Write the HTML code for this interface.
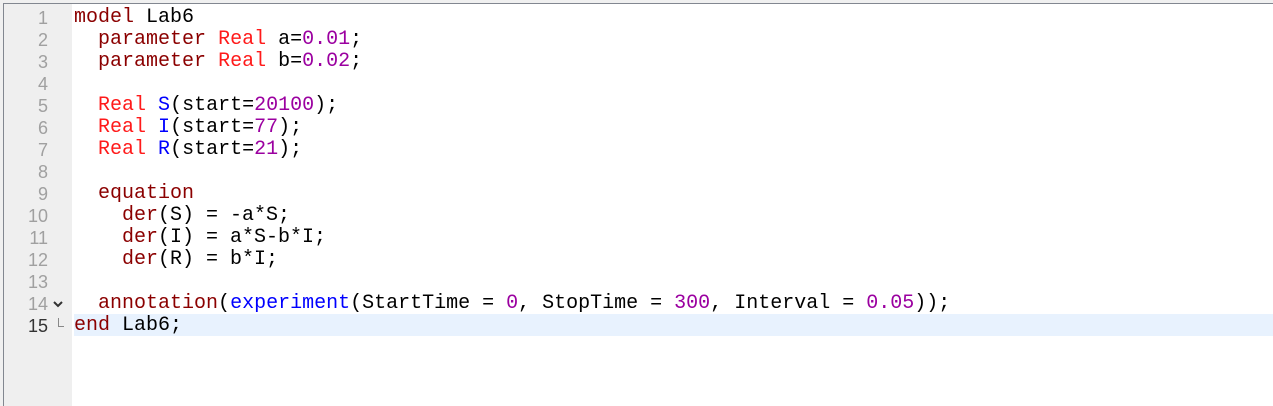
<!DOCTYPE html>
<html><head><style>
html,body{margin:0;padding:0;width:1273px;height:406px;overflow:hidden;background:#f0f0f0;}
#ed{position:absolute;left:3px;top:3px;right:0;bottom:0;border-left:1px solid #828790;border-top:1px solid #828790;background:#fff;}
#gut{position:absolute;left:0;top:0;width:68px;bottom:0;background:#efefef;}
.l{position:absolute;left:0;right:0;height:22px;font:20px/22px "Liberation Mono",monospace;white-space:pre;margin-top:1px;}
.n{position:absolute;left:0;width:44px;text-align:right;color:#a0a0a0;font-family:"Liberation Sans",sans-serif;font-size:18px;}
.c{position:absolute;left:70px;}
.k{color:#8b0000}.t{color:#ff1a1a}.v{color:#0000ff}.m{color:#9b00a0}
.cur{background:#e8f2fe;left:70px;margin-top:0;}
</style></head><body>
<div id="ed"><div id="gut"></div>
<div class="l" style="top:2px"><span class="n">1</span><span class="c"><span class="k">model</span> Lab6</span></div>
<div class="l" style="top:24px"><span class="n">2</span><span class="c">  <span class="k">parameter</span> <span class="t">Real</span> a=<span class="m">0.01</span>;</span></div>
<div class="l" style="top:46px"><span class="n">3</span><span class="c">  <span class="k">parameter</span> <span class="t">Real</span> b=<span class="m">0.02</span>;</span></div>
<div class="l" style="top:68px"><span class="n">4</span></div>
<div class="l" style="top:90px"><span class="n">5</span><span class="c">  <span class="t">Real</span> <span class="v">S</span>(start=<span class="m">20100</span>);</span></div>
<div class="l" style="top:112px"><span class="n">6</span><span class="c">  <span class="t">Real</span> <span class="v">I</span>(start=<span class="m">77</span>);</span></div>
<div class="l" style="top:134px"><span class="n">7</span><span class="c">  <span class="t">Real</span> <span class="v">R</span>(start=<span class="m">21</span>);</span></div>
<div class="l" style="top:156px"><span class="n">8</span></div>
<div class="l" style="top:178px"><span class="n">9</span><span class="c">  <span class="k">equation</span></span></div>
<div class="l" style="top:200px"><span class="n">10</span><span class="c">    <span class="k">der</span>(S) = -a*S;</span></div>
<div class="l" style="top:222px"><span class="n">11</span><span class="c">    <span class="k">der</span>(I) = a*S-b*I;</span></div>
<div class="l" style="top:244px"><span class="n">12</span><span class="c">    <span class="k">der</span>(R) = b*I;</span></div>
<div class="l" style="top:266px"><span class="n">13</span></div>
<div class="l" style="top:288px"><span class="n">14</span><svg style="position:absolute;left:48px;top:7px" width="12" height="8"><path d="M2 2L6 6L10 2" stroke="#333" stroke-width="2" fill="none"/></svg><span class="c">  <span class="k">annotation</span>(<span class="v">experiment</span>(StartTime = <span class="m">0</span>, StopTime = <span class="m">300</span>, Interval = <span class="m">0.05</span>));</span></div>
<div class="l cur" style="top:310px"></div>
<div class="l" style="top:310px"><span class="n" style="color:#333">15</span><svg style="position:absolute;left:53px;top:3px" width="10" height="12"><path d="M1.5 0V8.5H7" stroke="#888" stroke-width="1" fill="none"/></svg><span class="c"><span class="k">end</span> Lab6;</span></div>
</div>
</body></html>
